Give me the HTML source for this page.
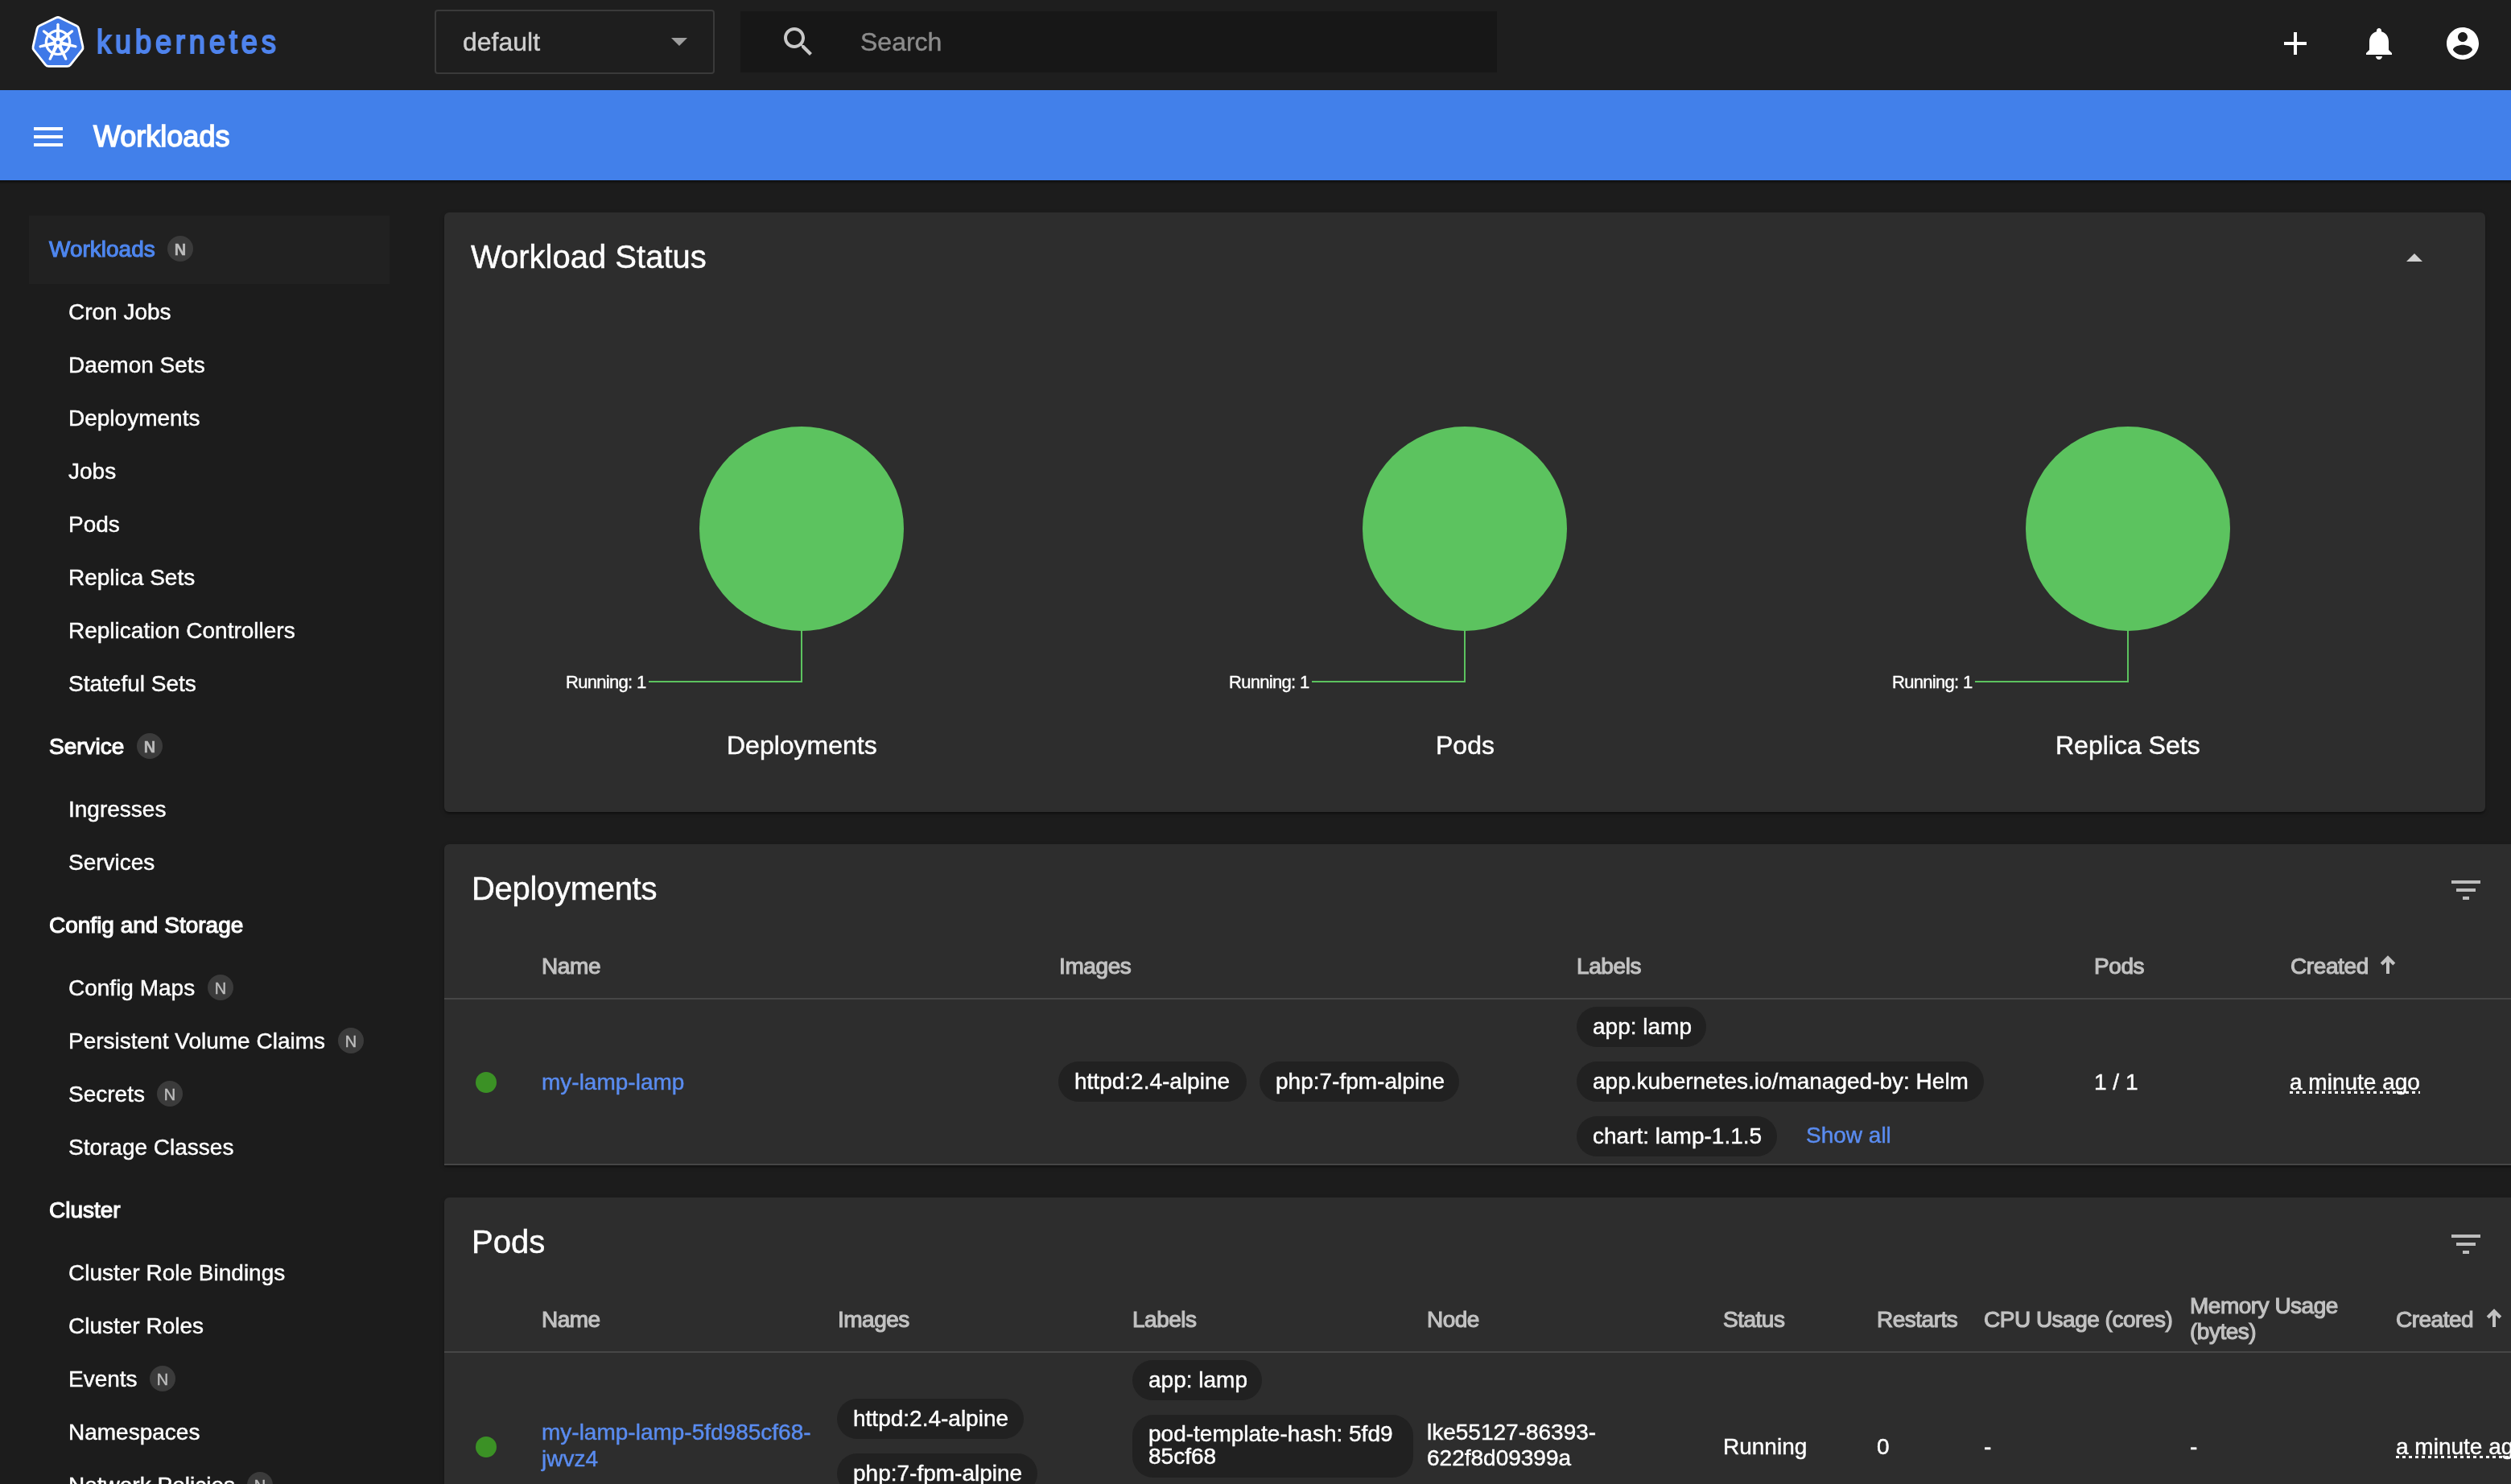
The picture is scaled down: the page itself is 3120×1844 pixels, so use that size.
<!DOCTYPE html>
<html><head><meta charset="utf-8"><title>Workloads - Kubernetes Dashboard</title>
<style>
html,body{margin:0;padding:0;width:3120px;height:1844px;overflow:hidden;background:#1c1c1c;}
body{position:relative;font-family:"Liberation Sans",sans-serif;}
.t{position:absolute;white-space:nowrap;will-change:transform;}
.r{position:absolute;}
</style></head><body>

<div class="r" style="left:0px;top:0px;width:3120px;height:112px;background:#1e1e1e;"></div>
<svg class="r" style="left:0;top:0" width="120" height="112" viewBox="0 0 120 112">
<path d="M69.66,22.07Q72.00,20.94 74.34,22.07L94.91,31.97Q97.25,33.10 97.83,35.64L102.91,57.89Q103.49,60.43 101.87,62.46L87.64,80.31Q86.01,82.34 83.41,82.34L60.59,82.34Q57.99,82.34 56.36,80.31L42.13,62.46Q40.51,60.43 41.09,57.89L46.17,35.64Q46.75,33.10 49.09,31.97Z" fill="#3f79e8" stroke="#fff" stroke-width="2.8" stroke-linejoin="round"/>
<circle cx="72" cy="52.8" r="14.7" fill="none" stroke="#fff" stroke-width="3.2"/>
<polygon points="74.40,48.80 73.55,30.20 70.45,30.20 69.60,48.80" fill="#fff"/><circle cx="72.00" cy="30.20" r="1.55" fill="#fff"/><polygon points="76.62,52.18 90.64,39.92 88.70,37.50 73.63,48.43" fill="#fff"/><circle cx="89.67" cy="38.71" r="1.55" fill="#fff"/><polygon points="75.37,56.03 93.69,59.34 94.38,56.32 76.43,51.35" fill="#fff"/><circle cx="94.03" cy="57.83" r="1.55" fill="#fff"/><polygon points="71.57,57.45 80.41,73.83 83.20,72.49 75.90,55.36" fill="#fff"/><circle cx="81.81" cy="73.16" r="1.55" fill="#fff"/><polygon points="68.10,55.36 60.80,72.49 63.59,73.83 72.43,57.45" fill="#fff"/><circle cx="62.19" cy="73.16" r="1.55" fill="#fff"/><polygon points="67.57,51.35 49.62,56.32 50.31,59.34 68.63,56.03" fill="#fff"/><circle cx="49.97" cy="57.83" r="1.55" fill="#fff"/><polygon points="70.37,48.43 55.30,37.50 53.36,39.92 67.38,52.18" fill="#fff"/><circle cx="54.33" cy="38.71" r="1.55" fill="#fff"/>
<circle cx="72" cy="52.8" r="6.2" fill="#fff"/><circle cx="72" cy="52.8" r="2.4" fill="#3f79e8"/>
</svg>
<div class="t " style="left:119.5px;top:26.9px;font-size:41px;line-height:51px;color:#4f84ee;letter-spacing:5.6px;-webkit-text-stroke:2.1px #4f84ee;transform:scaleX(0.88);transform-origin:0 0;">kubernetes</div>
<div class="r" style="left:540px;top:12px;width:344px;height:76px;border:2px solid #3a3a3a;border-radius:4px;"></div>
<div class="t " style="left:575.0px;top:31.9px;font-size:32px;line-height:40px;color:#cfcfcf;-webkit-text-stroke:0.45px #cfcfcf;">default</div>
<svg class="r" style="left:834px;top:47px" width="20" height="10" viewBox="0 0 20 10"><path d="M0 0h20L10 10z" fill="#9e9e9e"/></svg>
<div class="r" style="left:920px;top:14px;width:940px;height:76px;background:#171717;"></div>
<svg class="r" style="left:968px;top:28px" width="48" height="48" viewBox="0 0 24 24"><path fill="#c8c8c8" d="M15.5 14h-.79l-.28-.27C15.41 12.59 16 11.11 16 9.5 16 5.91 13.09 3 9.5 3S3 5.91 3 9.5 5.91 16 9.5 16c1.61 0 3.09-.59 4.23-1.57l.27.28v.79l5 4.99L20.49 19l-4.99-5zm-6 0C7.01 14 5 11.99 5 9.5S7.01 5 9.5 5 14 7.01 14 9.5 11.99 14 9.5 14z"/></svg>
<div class="t " style="left:1069.0px;top:31.9px;font-size:32px;line-height:40px;color:#8c8c8c;-webkit-text-stroke:0.45px #8c8c8c;">Search</div>
<svg class="r" style="left:2828px;top:30px" width="48" height="48" viewBox="0 0 24 24"><path fill="#fff" d="M19 13h-6v6h-2v-6H5v-2h6V5h2v6h6v2z"/></svg>
<svg class="r" style="left:2932px;top:30px" width="48" height="48" viewBox="0 0 24 24"><path fill="#fff" d="M12 22c1.1 0 2-.9 2-2h-4c0 1.1.89 2 2 2zm6-6v-5c0-3.07-1.64-5.64-4.5-6.32V4c0-.83-.67-1.5-1.5-1.5s-1.5.67-1.5 1.5v.68C7.63 5.36 6 7.92 6 11v5l-2 2v1h16v-1l-2-2z"/></svg>
<svg class="r" style="left:3036px;top:30px" width="48" height="48" viewBox="0 0 24 24"><path fill="#fff" d="M12 2C6.48 2 2 6.48 2 12s4.48 10 10 10 10-4.48 10-10S17.52 2 12 2zm0 3c1.66 0 3 1.34 3 3s-1.34 3-3 3-3-1.34-3-3 1.34-3 3-3zm0 14.2c-2.5 0-4.71-1.28-6-3.22.03-1.99 4-3.08 6-3.08 1.99 0 5.97 1.09 6 3.08-1.29 1.94-3.5 3.22-6 3.22z"/></svg>
<div class="r" style="left:0px;top:224px;width:3120px;height:5px;background:linear-gradient(rgba(0,0,0,.5),rgba(0,0,0,0));"></div>
<div class="r" style="left:0px;top:112px;width:3120px;height:112px;background:#4280ea;"></div>
<svg class="r" style="left:36px;top:146px" width="48" height="48" viewBox="0 0 24 24"><path fill="#fff" d="M3 18h18v-2H3v2zm0-5h18v-2H3v2zm0-7v2h18V6H3z"/></svg>
<div class="t " style="left:116.0px;top:147.2px;font-size:36px;line-height:45px;color:#fff;-webkit-text-stroke:1.44px #fff;">Workloads</div>
<div class="r" style="left:36px;top:268px;width:448px;height:85px;background:#212121;"></div>
<div class="t " style="left:60.5px;top:291.6px;font-size:28px;line-height:35px;color:#4e86ee;-webkit-text-stroke:1.12px #4e86ee;">Workloads</div>
<div class="r" style="left:208px;top:293px;width:32px;height:32px;border-radius:16px;background:#3b3b3b;"></div>
<div class="t " style="left:224.0px;top:298.3px;font-size:20px;line-height:25px;color:#bdbdbd;font-weight:700;transform:translateX(-50%);-webkit-text-stroke:0.4px #bdbdbd;">N</div>
<div class="t " style="left:84.5px;top:369.6px;font-size:28px;line-height:35px;color:#fff;-webkit-text-stroke:0.45px #fff;">Cron Jobs</div>
<div class="t " style="left:84.5px;top:435.6px;font-size:28px;line-height:35px;color:#fff;-webkit-text-stroke:0.45px #fff;">Daemon Sets</div>
<div class="t " style="left:84.5px;top:501.6px;font-size:28px;line-height:35px;color:#fff;-webkit-text-stroke:0.45px #fff;">Deployments</div>
<div class="t " style="left:84.5px;top:567.6px;font-size:28px;line-height:35px;color:#fff;-webkit-text-stroke:0.45px #fff;">Jobs</div>
<div class="t " style="left:84.5px;top:633.6px;font-size:28px;line-height:35px;color:#fff;-webkit-text-stroke:0.45px #fff;">Pods</div>
<div class="t " style="left:84.5px;top:699.6px;font-size:28px;line-height:35px;color:#fff;-webkit-text-stroke:0.45px #fff;">Replica Sets</div>
<div class="t " style="left:84.5px;top:765.6px;font-size:28px;line-height:35px;color:#fff;-webkit-text-stroke:0.45px #fff;">Replication Controllers</div>
<div class="t " style="left:84.5px;top:831.6px;font-size:28px;line-height:35px;color:#fff;-webkit-text-stroke:0.45px #fff;">Stateful Sets</div>
<div class="t " style="left:60.5px;top:909.7px;font-size:28px;line-height:35px;color:#fff;-webkit-text-stroke:1.12px #fff;">Service</div>
<div class="r" style="left:170px;top:910.9px;width:32px;height:32px;border-radius:16px;background:#3b3b3b;"></div>
<div class="t " style="left:186.0px;top:916.2px;font-size:20px;line-height:25px;color:#bdbdbd;font-weight:700;transform:translateX(-50%);-webkit-text-stroke:0.4px #bdbdbd;">N</div>
<div class="t " style="left:84.5px;top:987.7px;font-size:28px;line-height:35px;color:#fff;-webkit-text-stroke:0.45px #fff;">Ingresses</div>
<div class="t " style="left:84.5px;top:1053.7px;font-size:28px;line-height:35px;color:#fff;-webkit-text-stroke:0.45px #fff;">Services</div>
<div class="t " style="left:60.5px;top:1131.7px;font-size:28px;line-height:35px;color:#fff;-webkit-text-stroke:1.12px #fff;">Config and Storage</div>
<div class="t " style="left:84.5px;top:1209.7px;font-size:28px;line-height:35px;color:#fff;-webkit-text-stroke:0.45px #fff;">Config Maps</div>
<div class="r" style="left:258px;top:1210.9px;width:32px;height:32px;border-radius:16px;background:#3b3b3b;"></div>
<div class="t " style="left:274.0px;top:1216.2px;font-size:20px;line-height:25px;color:#bdbdbd;-webkit-text-stroke:0.45px #bdbdbd;transform:translateX(-50%);">N</div>
<div class="t " style="left:84.5px;top:1275.7px;font-size:28px;line-height:35px;color:#fff;-webkit-text-stroke:0.45px #fff;">Persistent Volume Claims</div>
<div class="r" style="left:420px;top:1276.9px;width:32px;height:32px;border-radius:16px;background:#3b3b3b;"></div>
<div class="t " style="left:436.0px;top:1282.2px;font-size:20px;line-height:25px;color:#bdbdbd;-webkit-text-stroke:0.45px #bdbdbd;transform:translateX(-50%);">N</div>
<div class="t " style="left:84.5px;top:1341.7px;font-size:28px;line-height:35px;color:#fff;-webkit-text-stroke:0.45px #fff;">Secrets</div>
<div class="r" style="left:195px;top:1342.9px;width:32px;height:32px;border-radius:16px;background:#3b3b3b;"></div>
<div class="t " style="left:211.0px;top:1348.2px;font-size:20px;line-height:25px;color:#bdbdbd;-webkit-text-stroke:0.45px #bdbdbd;transform:translateX(-50%);">N</div>
<div class="t " style="left:84.5px;top:1407.7px;font-size:28px;line-height:35px;color:#fff;-webkit-text-stroke:0.45px #fff;">Storage Classes</div>
<div class="t " style="left:60.5px;top:1485.7px;font-size:28px;line-height:35px;color:#fff;-webkit-text-stroke:1.12px #fff;">Cluster</div>
<div class="t " style="left:84.5px;top:1563.7px;font-size:28px;line-height:35px;color:#fff;-webkit-text-stroke:0.45px #fff;">Cluster Role Bindings</div>
<div class="t " style="left:84.5px;top:1629.7px;font-size:28px;line-height:35px;color:#fff;-webkit-text-stroke:0.45px #fff;">Cluster Roles</div>
<div class="t " style="left:84.5px;top:1695.7px;font-size:28px;line-height:35px;color:#fff;-webkit-text-stroke:0.45px #fff;">Events</div>
<div class="r" style="left:186px;top:1696.9px;width:32px;height:32px;border-radius:16px;background:#3b3b3b;"></div>
<div class="t " style="left:202.0px;top:1702.2px;font-size:20px;line-height:25px;color:#bdbdbd;-webkit-text-stroke:0.45px #bdbdbd;transform:translateX(-50%);">N</div>
<div class="t " style="left:84.5px;top:1761.7px;font-size:28px;line-height:35px;color:#fff;-webkit-text-stroke:0.45px #fff;">Namespaces</div>
<div class="t " style="left:84.5px;top:1827.7px;font-size:28px;line-height:35px;color:#fff;-webkit-text-stroke:0.45px #fff;">Network Policies</div>
<div class="r" style="left:307px;top:1828.9px;width:32px;height:32px;border-radius:16px;background:#3b3b3b;"></div>
<div class="t " style="left:323.0px;top:1834.2px;font-size:20px;line-height:25px;color:#bdbdbd;-webkit-text-stroke:0.45px #bdbdbd;transform:translateX(-50%);">N</div>
<div class="r" style="left:552px;top:264px;width:2536px;height:745px;background:#2d2d2d;border-radius:6px;box-shadow:0 3px 2px -2px rgba(0,0,0,.25),0 2px 2px 0 rgba(0,0,0,.18),0 2px 6px 0 rgba(0,0,0,.15);"></div>
<div class="t " style="left:585.0px;top:294.4px;font-size:40px;line-height:50px;color:#fff;-webkit-text-stroke:0.45px #fff;">Workload Status</div>
<svg class="r" style="left:2990px;top:315px" width="20" height="10" viewBox="0 0 20 10"><path d="M0 10h20L10 0z" fill="#d0d0d0"/></svg>
<div class="r" style="left:869px;top:530px;width:254px;height:254px;border-radius:50%;background:#5cc35f;"></div>
<div class="r" style="left:995px;top:783px;width:2px;height:65px;background:#5cc35f;"></div>
<div class="r" style="left:806px;top:846px;width:191px;height:2px;background:#5cc35f;"></div>
<div class="t " style="left:703.0px;top:834.0px;font-size:22px;line-height:28px;color:#fff;letter-spacing:-0.7px;-webkit-text-stroke:0.4px #fff;">Running: 1</div>
<div class="t " style="left:902.6px;top:905.9px;font-size:32px;line-height:40px;color:#fff;-webkit-text-stroke:0.45px #fff;">Deployments</div>
<div class="r" style="left:1693px;top:530px;width:254px;height:254px;border-radius:50%;background:#5cc35f;"></div>
<div class="r" style="left:1819px;top:783px;width:2px;height:65px;background:#5cc35f;"></div>
<div class="r" style="left:1630px;top:846px;width:191px;height:2px;background:#5cc35f;"></div>
<div class="t " style="left:1527.0px;top:834.0px;font-size:22px;line-height:28px;color:#fff;letter-spacing:-0.7px;-webkit-text-stroke:0.4px #fff;">Running: 1</div>
<div class="t " style="left:1783.5px;top:905.9px;font-size:32px;line-height:40px;color:#fff;-webkit-text-stroke:0.45px #fff;">Pods</div>
<div class="r" style="left:2517px;top:530px;width:254px;height:254px;border-radius:50%;background:#5cc35f;"></div>
<div class="r" style="left:2643px;top:783px;width:2px;height:65px;background:#5cc35f;"></div>
<div class="r" style="left:2454px;top:846px;width:191px;height:2px;background:#5cc35f;"></div>
<div class="t " style="left:2351.0px;top:834.0px;font-size:22px;line-height:28px;color:#fff;letter-spacing:-0.7px;-webkit-text-stroke:0.4px #fff;">Running: 1</div>
<div class="t " style="left:2554.2px;top:905.9px;font-size:32px;line-height:40px;color:#fff;-webkit-text-stroke:0.45px #fff;">Replica Sets</div>
<div class="r" style="left:552px;top:1049px;width:2600px;height:399px;background:#2d2d2d;border-radius:6px 0 0 0;box-shadow:0 3px 2px -2px rgba(0,0,0,.25),0 2px 2px 0 rgba(0,0,0,.18),0 2px 6px 0 rgba(0,0,0,.15);"></div>
<div class="t " style="left:586.0px;top:1079.1px;font-size:40px;line-height:50px;color:#fff;-webkit-text-stroke:0.45px #fff;letter-spacing:-0.3px;">Deployments</div>
<svg class="r" style="left:3040px;top:1082px" width="48" height="48" viewBox="0 0 24 24"><path fill="#bdbdbd" d="M10 18h4v-2h-4v2zM3 6v2h18V6H3zm3 7h12v-2H6v2z"/></svg>
<div class="t " style="left:673.0px;top:1182.8px;font-size:28px;line-height:35px;color:#c2c2c2;-webkit-text-stroke:1.12px #c2c2c2;letter-spacing:-0.4px;">Name</div>
<div class="t " style="left:1316.0px;top:1182.8px;font-size:28px;line-height:35px;color:#c2c2c2;-webkit-text-stroke:1.12px #c2c2c2;letter-spacing:-0.4px;">Images</div>
<div class="t " style="left:1959.0px;top:1182.8px;font-size:28px;line-height:35px;color:#c2c2c2;-webkit-text-stroke:1.12px #c2c2c2;letter-spacing:-0.4px;">Labels</div>
<div class="t " style="left:2602.0px;top:1182.8px;font-size:28px;line-height:35px;color:#c2c2c2;-webkit-text-stroke:1.12px #c2c2c2;letter-spacing:-0.4px;">Pods</div>
<div class="t " style="left:2845.6px;top:1182.8px;font-size:28px;line-height:35px;color:#c2c2c2;-webkit-text-stroke:1.12px #c2c2c2;letter-spacing:-0.4px;">Created</div>
<svg class="r" style="left:2955px;top:1184px" width="24" height="28" viewBox="0 0 24 28"><rect x="10" y="6" width="4" height="20" fill="#c2c2c2"/><polyline points="4.2,14 12,6.2 19.8,14" stroke="#c2c2c2" stroke-width="4.2" fill="none" stroke-linecap="butt" stroke-linejoin="miter"/></svg>
<div class="r" style="left:552px;top:1240px;width:2600px;height:2px;background:#464646;"></div>
<div class="r" style="left:591px;top:1332px;width:26px;height:26px;border-radius:50%;background:#3b9125;"></div>
<div class="t " style="left:673.0px;top:1327.0px;font-size:28px;line-height:35px;color:#5a8cf0;-webkit-text-stroke:0.45px #5a8cf0;">my-lamp-lamp</div>
<div class="r" style="left:1315px;top:1319px;width:234.0px;height:50px;border-radius:25px;background:#212121;"></div>
<div class="t " style="left:1335.0px;top:1326.0px;font-size:28px;line-height:35px;color:#fff;-webkit-text-stroke:0.45px #fff;">httpd:2.4-alpine</div>
<div class="r" style="left:1564.5px;top:1319px;width:248.5px;height:50px;border-radius:25px;background:#212121;"></div>
<div class="t " style="left:1584.5px;top:1326.0px;font-size:28px;line-height:35px;color:#fff;-webkit-text-stroke:0.45px #fff;">php:7-fpm-alpine</div>
<div class="r" style="left:1959px;top:1251px;width:161.0px;height:50px;border-radius:25px;background:#212121;"></div>
<div class="t " style="left:1979.0px;top:1258.0px;font-size:28px;line-height:35px;color:#fff;-webkit-text-stroke:0.45px #fff;">app: lamp</div>
<div class="r" style="left:1959px;top:1319px;width:505.5px;height:50px;border-radius:25px;background:#212121;"></div>
<div class="t " style="left:1979.0px;top:1326.0px;font-size:28px;line-height:35px;color:#fff;-webkit-text-stroke:0.45px #fff;">app.kubernetes.io/managed-by: Helm</div>
<div class="r" style="left:1959px;top:1387px;width:248.6px;height:50px;border-radius:25px;background:#212121;"></div>
<div class="t " style="left:1979.0px;top:1394.0px;font-size:28px;line-height:35px;color:#fff;-webkit-text-stroke:0.45px #fff;">chart: lamp-1.1.5</div>
<div class="t " style="left:2244.4px;top:1393.4px;font-size:28px;line-height:35px;color:#5a8cf0;-webkit-text-stroke:0.45px #5a8cf0;">Show all</div>
<div class="t " style="left:2602.0px;top:1327.0px;font-size:28px;line-height:35px;color:#fff;-webkit-text-stroke:0.45px #fff;">1 / 1</div>
<div class="t " style="left:2845.0px;top:1327.0px;font-size:28px;line-height:35px;color:#fff;-webkit-text-stroke:0.45px #fff;background-image:linear-gradient(90deg,#fff 50%,transparent 50%);background-size:8px 3px;background-repeat:repeat-x;background-position:0 29px;">a minute ago</div>
<div class="r" style="left:552px;top:1446px;width:2600px;height:2px;background:#464646;"></div>
<div class="r" style="left:552px;top:1488px;width:2600px;height:400px;background:#2d2d2d;border-radius:6px 0 0 0;box-shadow:0 3px 2px -2px rgba(0,0,0,.25),0 2px 2px 0 rgba(0,0,0,.18),0 2px 6px 0 rgba(0,0,0,.15);"></div>
<div class="t " style="left:586.0px;top:1518.1px;font-size:40px;line-height:50px;color:#fff;-webkit-text-stroke:0.45px #fff;">Pods</div>
<svg class="r" style="left:3040px;top:1522px" width="48" height="48" viewBox="0 0 24 24"><path fill="#bdbdbd" d="M10 18h4v-2h-4v2zM3 6v2h18V6H3zm3 7h12v-2H6v2z"/></svg>
<div class="t " style="left:673.0px;top:1621.8px;font-size:28px;line-height:35px;color:#c2c2c2;-webkit-text-stroke:1.12px #c2c2c2;letter-spacing:-0.5px;">Name</div>
<div class="t " style="left:1040.7px;top:1621.8px;font-size:28px;line-height:35px;color:#c2c2c2;-webkit-text-stroke:1.12px #c2c2c2;letter-spacing:-0.5px;">Images</div>
<div class="t " style="left:1406.7px;top:1621.8px;font-size:28px;line-height:35px;color:#c2c2c2;-webkit-text-stroke:1.12px #c2c2c2;letter-spacing:-0.5px;">Labels</div>
<div class="t " style="left:1773.4px;top:1621.8px;font-size:28px;line-height:35px;color:#c2c2c2;-webkit-text-stroke:1.12px #c2c2c2;letter-spacing:-0.5px;">Node</div>
<div class="t " style="left:2140.6px;top:1621.8px;font-size:28px;line-height:35px;color:#c2c2c2;-webkit-text-stroke:1.12px #c2c2c2;letter-spacing:-0.5px;">Status</div>
<div class="t " style="left:2331.5px;top:1621.8px;font-size:28px;line-height:35px;color:#c2c2c2;-webkit-text-stroke:1.12px #c2c2c2;letter-spacing:-0.5px;">Restarts</div>
<div class="t " style="left:2464.7px;top:1621.8px;font-size:28px;line-height:35px;color:#c2c2c2;-webkit-text-stroke:1.12px #c2c2c2;letter-spacing:-0.5px;">CPU Usage (cores)</div>
<div class="t " style="left:2976.5px;top:1621.8px;font-size:28px;line-height:35px;color:#c2c2c2;-webkit-text-stroke:1.12px #c2c2c2;letter-spacing:-0.5px;">Created</div>
<div class="t " style="left:2720.6px;top:1605.3px;font-size:28px;line-height:35px;color:#c2c2c2;-webkit-text-stroke:1.12px #c2c2c2;letter-spacing:-0.5px;">Memory Usage</div>
<div class="t " style="left:2720.6px;top:1637.3px;font-size:28px;line-height:35px;color:#c2c2c2;-webkit-text-stroke:1.12px #c2c2c2;letter-spacing:-0.5px;">(bytes)</div>
<svg class="r" style="left:3087px;top:1623px" width="24" height="28" viewBox="0 0 24 28"><rect x="10" y="6" width="4" height="20" fill="#c2c2c2"/><polyline points="4.2,14 12,6.2 19.8,14" stroke="#c2c2c2" stroke-width="4.2" fill="none" stroke-linecap="butt" stroke-linejoin="miter"/></svg>
<div class="r" style="left:552px;top:1679px;width:2600px;height:2px;background:#464646;"></div>
<div class="r" style="left:591px;top:1785px;width:26px;height:26px;border-radius:50%;background:#3b9125;"></div>
<div class="t " style="left:673.0px;top:1762.4px;font-size:28px;line-height:35px;color:#5a8cf0;-webkit-text-stroke:0.45px #5a8cf0;">my-lamp-lamp-5fd985cf68-</div>
<div class="t " style="left:673.0px;top:1794.8px;font-size:28px;line-height:35px;color:#5a8cf0;-webkit-text-stroke:0.45px #5a8cf0;">jwvz4</div>
<div class="r" style="left:1040px;top:1738px;width:232.0px;height:50px;border-radius:25px;background:#212121;"></div>
<div class="t " style="left:1060.0px;top:1745.0px;font-size:28px;line-height:35px;color:#fff;-webkit-text-stroke:0.45px #fff;">httpd:2.4-alpine</div>
<div class="r" style="left:1040px;top:1806px;width:248.5px;height:50px;border-radius:25px;background:#212121;"></div>
<div class="t " style="left:1060.0px;top:1813.0px;font-size:28px;line-height:35px;color:#fff;-webkit-text-stroke:0.45px #fff;">php:7-fpm-alpine</div>
<div class="r" style="left:1406.7px;top:1690px;width:161.0px;height:50px;border-radius:25px;background:#212121;"></div>
<div class="t " style="left:1426.7px;top:1697.0px;font-size:28px;line-height:35px;color:#fff;-webkit-text-stroke:0.45px #fff;">app: lamp</div>
<div class="r" style="left:1406.7px;top:1758px;width:349px;height:78px;border-radius:26px;background:#212121;"></div>
<div class="t " style="left:1426.5px;top:1763.5px;font-size:28px;line-height:35px;color:#fff;-webkit-text-stroke:0.45px #fff;">pod-template-hash: 5fd9</div>
<div class="t " style="left:1426.5px;top:1792.2px;font-size:28px;line-height:35px;color:#fff;-webkit-text-stroke:0.45px #fff;">85cf68</div>
<div class="t " style="left:1773.4px;top:1762.0px;font-size:28px;line-height:35px;color:#fff;-webkit-text-stroke:0.45px #fff;">lke55127-86393-</div>
<div class="t " style="left:1773.4px;top:1794.2px;font-size:28px;line-height:35px;color:#fff;-webkit-text-stroke:0.45px #fff;">622f8d09399a</div>
<div class="t " style="left:2140.6px;top:1779.9px;font-size:28px;line-height:35px;color:#fff;-webkit-text-stroke:0.45px #fff;">Running</div>
<div class="t " style="left:2331.5px;top:1779.9px;font-size:28px;line-height:35px;color:#fff;-webkit-text-stroke:0.45px #fff;">0</div>
<div class="t " style="left:2464.7px;top:1779.9px;font-size:28px;line-height:35px;color:#fff;-webkit-text-stroke:0.45px #fff;">-</div>
<div class="t " style="left:2720.6px;top:1779.9px;font-size:28px;line-height:35px;color:#fff;-webkit-text-stroke:0.45px #fff;">-</div>
<div class="t " style="left:2976.5px;top:1779.9px;font-size:28px;line-height:35px;color:#fff;-webkit-text-stroke:0.45px #fff;background-image:linear-gradient(90deg,#fff 50%,transparent 50%);background-size:8px 3px;background-repeat:repeat-x;background-position:0 29px;">a minute ago</div>
</body></html>
